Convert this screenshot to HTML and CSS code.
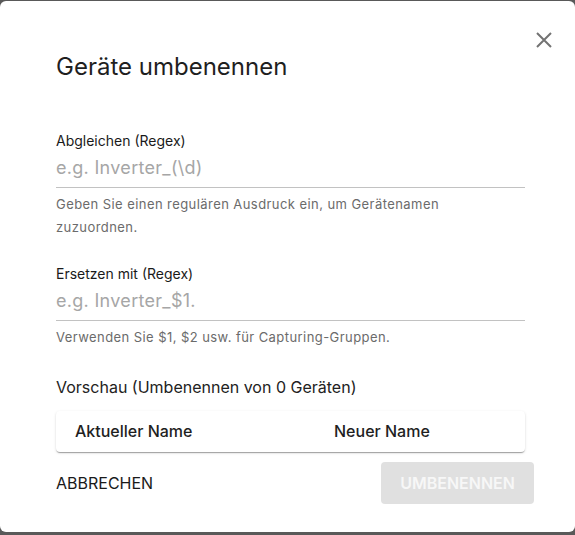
FILE: index.html
```html
<!DOCTYPE html>
<html lang="de">
<head>
    <meta charset="UTF-8">
    <meta name="viewport" content="width=device-width, initial-scale=1.0">
    <title>Geräte umbenennen</title>
    <link rel="stylesheet" href="styles.css">
</head>
<body>

    <div class="dialog">
        <button class="close-btn" aria-label="Schließen">
            <svg width="24" height="24" viewBox="0 0 24 24">
                <path d="M5 5 L19 19 M19 5 L5 19" stroke="currentColor" stroke-width="2" fill="none"/>
            </svg>
        </button>

        <h2 class="dialog-title">Geräte umbenennen</h2>

        <!-- Match pattern -->
        <div class="field">
            <label class="field-label">Abgleichen (Regex)</label>
            <input class="field-input" type="text" placeholder="e.g. Inverter_(\d)">
            <p class="field-help">Geben Sie einen regulären Ausdruck ein, um Gerätenamen zuzuordnen.</p>
        </div>

        <!-- Replacement -->
        <div class="field">
            <label class="field-label">Ersetzen mit (Regex)</label>
            <input class="field-input" type="text" placeholder="e.g. Inverter_$1.">
            <p class="field-help">Verwenden Sie $1, $2 usw. für Capturing-Gruppen.</p>
        </div>

        <h3 class="preview-title">Vorschau (Umbenennen von 0 Geräten)</h3>

        <div class="preview-table">
            <div class="preview-head">
                <span>Aktueller Name</span>
                <span>Neuer Name</span>
            </div>
        </div>

        <div class="dialog-actions">
            <button class="btn-text">Abbrechen</button>
            <button class="btn-primary" disabled>Umbenennen</button>
        </div>
    </div>

</body>
</html>
```

FILE: styles.css
```css
/* General Styles */
body {
    font-family: Inter, "Noto Sans", sans-serif;
    margin: 0;
    padding: 0;
    background: #595959;
    height: 535px;
    overflow: hidden;
}

/* Dialog */
.dialog {
    position: relative;
    background: #fff;
    margin-top: 1px;
    height: 531px;
    border-radius: 6px;
    padding: 0 50px 0 56px;
    box-sizing: border-box;
}

.close-btn {
    position: absolute;
    top: 27px;
    right: 19px;
    width: 24px;
    height: 24px;
    padding: 0;
    border: none;
    background: none;
    color: #737373;
    cursor: pointer;
}

.close-btn svg {
    display: block;
}

.dialog-title {
    margin: 0;
    padding-top: 50px;
    font-size: 24px;
    line-height: 32px;
    font-weight: 400;
    color: #1f1f1f;
}

/* Form fields */
.field {
    width: 469px;
    margin-top: 48px;
}

.field + .field {
    margin-top: 25px;
}

.field-label {
    display: block;
    font-size: 14px;
    line-height: 20px;
    color: #1a1a1a;
}

.field-input {
    display: block;
    width: 100%;
    box-sizing: border-box;
    margin-top: 3px;
    padding: 0 0 5px;
    border: none;
    border-bottom: 1px solid #c2c2c2;
    font-family: inherit;
    font-size: 18px;
    line-height: 28px;
    letter-spacing: 0.3px;
    color: #222;
    outline: none;
    background: transparent;
}

.field-input::placeholder {
    color: #a6a6a6;
}

.field-help {
    max-width: 455px;
    margin: 5px 0 0;
    font-size: 13px;
    line-height: 23px;
    letter-spacing: 0.43px;
    color: #6b6b6b;
}

/* Preview */
.preview-title {
    margin: 26px 0 0;
    font-size: 16px;
    line-height: 24px;
    font-weight: 400;
    color: #222;
}

.preview-table {
    width: 469px;
    margin-top: 12px;
    border-radius: 4px;
    background: #fff;
    box-shadow: 0 2px 1px -1px rgba(0,0,0,0.2), 0 1px 1px 0 rgba(0,0,0,0.14), 0 1px 3px 0 rgba(0,0,0,0.12);
}

.preview-head {
    display: grid;
    grid-template-columns: 259px 1fr;
    padding: 0 19px 2px;
    height: 41px;
    box-sizing: border-box;
    align-items: center;
    font-size: 16px;
    font-weight: 500;
    color: #1f1f1f;
}

/* Actions */
.dialog-actions {
    width: 478px;
    margin-top: 10px;
    display: flex;
    justify-content: space-between;
    align-items: center;
}

.btn-text {
    border: none;
    background: none;
    padding: 0;
    font-family: inherit;
    font-size: 16px;
    font-weight: 400;
    text-transform: uppercase;
    color: #1a1a1a;
    cursor: pointer;
}

.btn-primary {
    width: 153px;
    height: 42px;
    border: none;
    border-radius: 4px;
    background: #e0e0e0;
    color: #f7f7f7;
    font-family: inherit;
    font-size: 16px;
    font-weight: 600;
    text-transform: uppercase;
}
```
